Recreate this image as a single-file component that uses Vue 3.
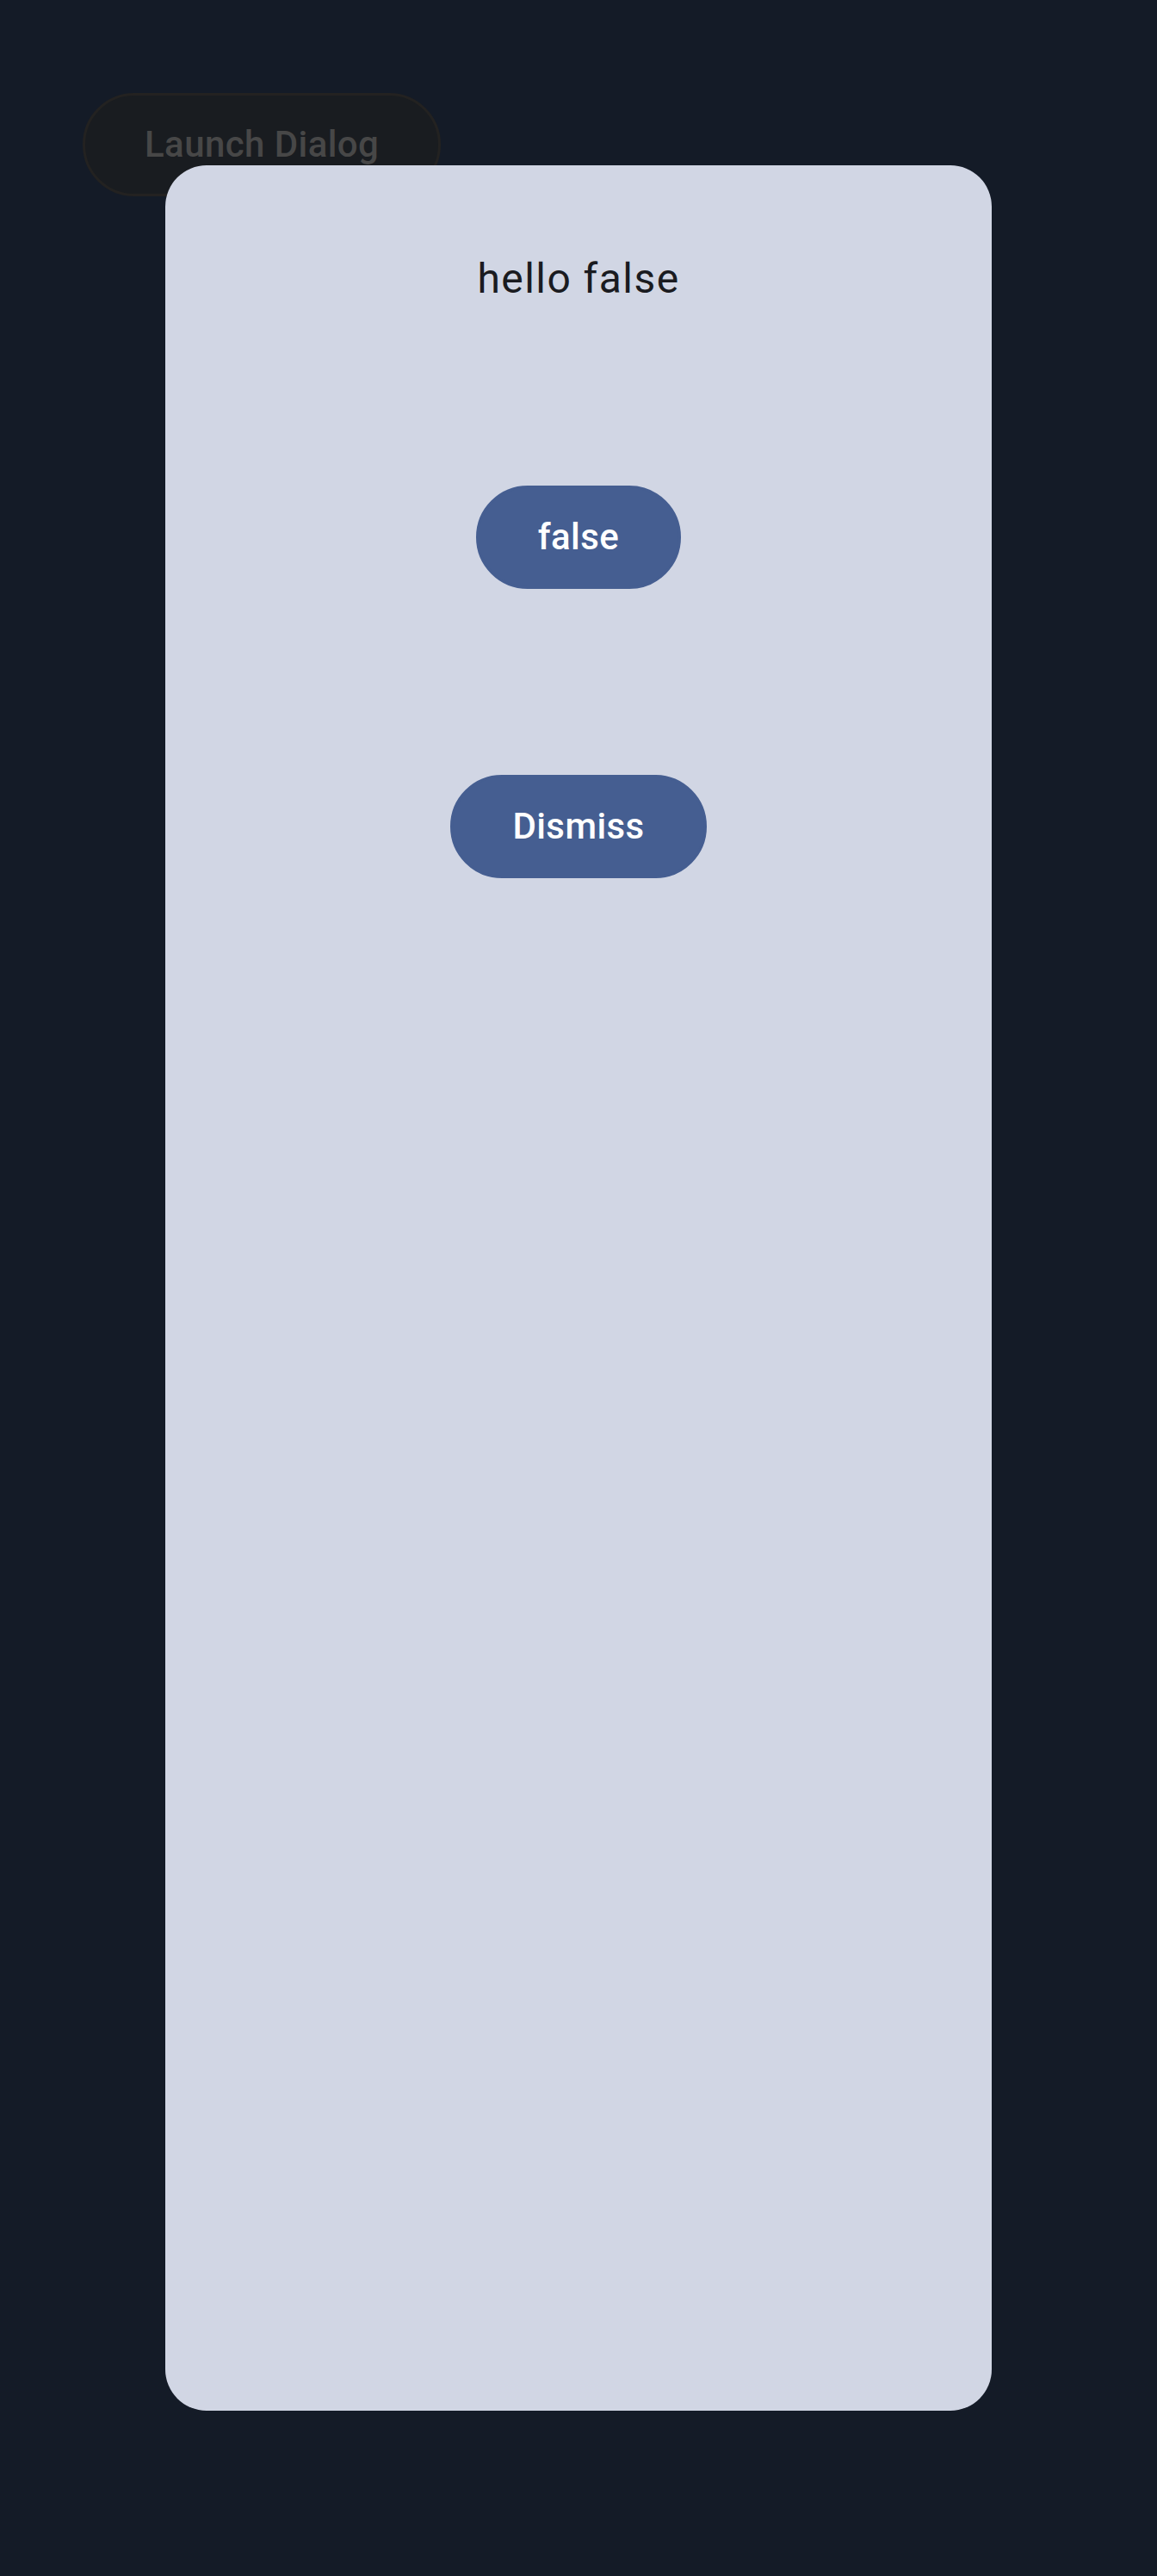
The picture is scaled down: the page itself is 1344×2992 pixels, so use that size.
<script setup>
import { ref } from 'vue'

const open = ref(true)
const checked = ref(false)
</script>

<template>
  <div class="screen">
    <main class="page">
      <button class="button launch" type="button" @click="open = true">Launch Dialog</button>
    </main>
    <div v-if="open" class="overlay">
      <section class="dialog" role="dialog" aria-modal="true" aria-labelledby="dialog-title">
        <p id="dialog-title" class="message">hello {{ checked }}</p>
        <button class="button filled" type="button" @click="checked = !checked">{{ checked }}</button>
        <button class="button filled" type="button" @click="open = false">Dismiss</button>
      </section>
    </div>
  </div>
</template>

<style>
body {
  background: #141b27;
}
</style>

<style scoped>
.screen {
  position: relative;
  min-height: 100vh;
  background: #141b27;
  font-family: Roboto, "Noto Sans", sans-serif;
}

.page {
  padding: 96px;
}

.overlay {
  position: absolute;
  inset: 0;
  display: flex;
  box-sizing: border-box;
  padding: 192px;
}

.dialog {
  flex: 1;
  display: flex;
  flex-direction: column;
  align-items: center;
  gap: 192px;
  box-sizing: border-box;
  padding: 96px;
  border-radius: 48px;
  background: #d1d6e4;
}

.message {
  margin: 0;
  color: #1a1b20;
  font-size: 48px;
  line-height: 72px;
  letter-spacing: 0.03em;
}

.button {
  box-sizing: border-box;
  height: 120px;
  margin: 12px 0;
  padding: 0 69px;
  border: 3px solid transparent;
  border-radius: 60px;
  font-family: inherit;
  font-size: 42px;
  font-weight: 500;
  line-height: 60px;
  letter-spacing: 0.01em;
  cursor: pointer;
}

.launch {
  border-color: #232221;
  background: #191c20;
  color: #474747;
}

.filled {
  border-color: #455e91;
  background: #455e91;
  color: #ffffff;
}
</style>
